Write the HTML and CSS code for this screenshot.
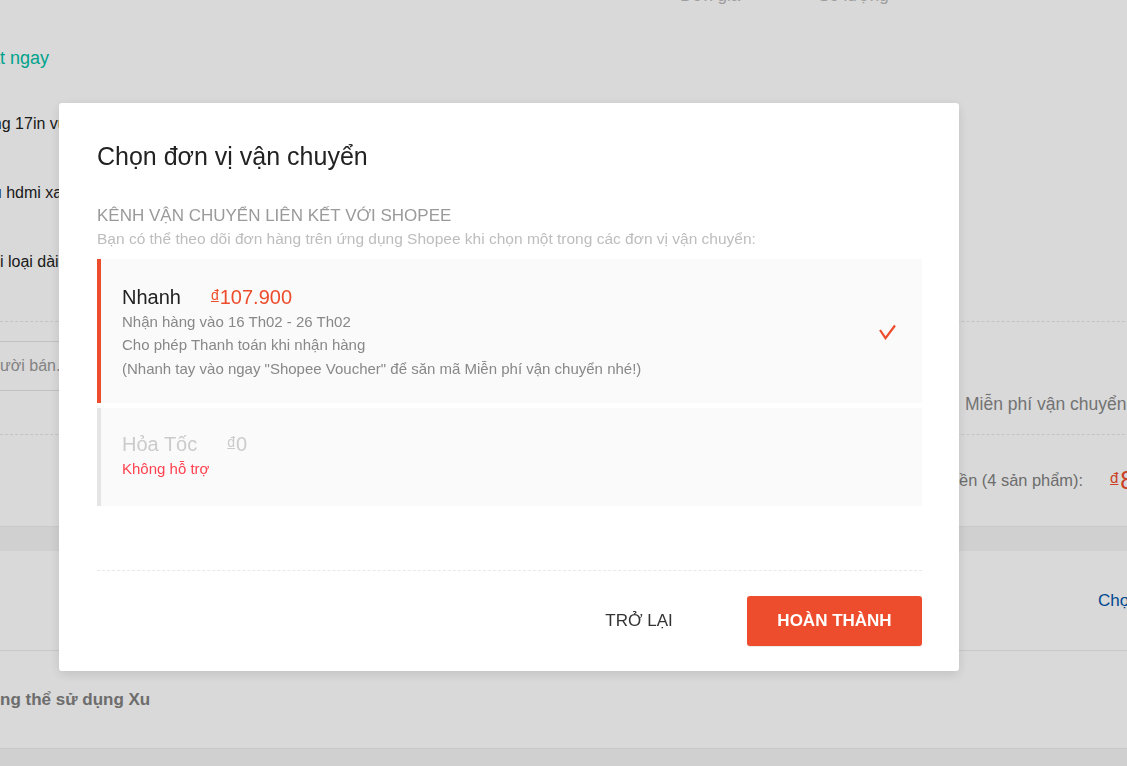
FILE: index.html
```html
<!DOCTYPE html>
<html lang="vi">
<head>
<meta charset="utf-8">
<title>Thanh toán</title>
<link rel="stylesheet" href="styles.css">
</head>
<body>
<main class="page">
  <section class="card order">
    <div class="head">
      <span class="head-product">Sản phẩm</span>
      <span>Đơn giá</span>
      <span>Số lượng</span>
    </div>
    <div class="shop"><span class="chat">Chat ngay</span></div>
    <div class="items">
      <div class="item">Màn hình phẳng 17in vuông viền đen</div>
      <div class="item">Cáp máy chiếu hdmi xanh 1.5m</div>
      <div class="item">Cáp nguồn mọi loại dài 1.5m</div>
    </div>
    <div class="extra">
      <div class="note">
        <div class="note-input"><span class="placeholder">Lưu ý cho Người bán...</span></div>
      </div>
      <div class="ship">Miễn phí vận chuyển</div>
    </div>
    <div class="total">
      <span class="total-label">Tổng số tiền (4 sản phẩm):</span>
      <span class="total-amount"><span class="cur">đ</span>838.000</span>
    </div>
  </section>
  <section class="card voucher">
    <div class="voucher-row">
      <span class="voucher-label">Shopee Voucher</span>
      <span class="voucher-link">Chọn Voucher</span>
    </div>
    <div class="coin-row">Không thể sử dụng Xu</div>
  </section>
</main>

<div class="overlay"></div>

<div class="modal" role="dialog" aria-label="Chọn đơn vị vận chuyển">
  <h2 class="modal-title">Chọn đơn vị vận chuyển</h2>
  <div class="group-title">KÊNH VẬN CHUYỂN LIÊN KẾT VỚI SHOPEE</div>
  <div class="group-desc">Bạn có thể theo dõi đơn hàng trên ứng dụng Shopee khi chọn một trong các đơn vị vận chuyển:</div>
  <div class="options">
    <div class="option selected">
      <div class="option-body">
        <div class="option-head">
          <span class="option-name">Nhanh</span>
          <span class="option-price"><span class="cur">đ</span>107.900</span>
        </div>
        <div class="option-line">Nhận hàng vào 16 Th02 - 26 Th02</div>
        <div class="option-line">Cho phép Thanh toán khi nhận hàng</div>
        <div class="option-line">(Nhanh tay vào ngay "Shopee Voucher" để săn mã Miễn phí vận chuyển nhé!)</div>
      </div>
      <svg class="check" width="19" height="16" viewBox="0 0 19 16" aria-hidden="true">
        <polyline points="3,6 8.5,14.2 18,1.5" fill="none" stroke="#ee4d2d" stroke-width="2.2"/>
      </svg>
    </div>
    <div class="option disabled">
      <div class="option-body">
        <div class="option-head">
          <span class="option-name">Hỏa Tốc</span>
          <span class="option-price"><span class="cur">đ</span>0</span>
        </div>
        <div class="option-error">Không hỗ trợ</div>
      </div>
    </div>
  </div>
  <div class="modal-footer">
    <button class="btn-back" type="button">TRỞ LẠI</button>
    <button class="btn-primary" type="button">HOÀN THÀNH</button>
  </div>
</div>
</body>
</html>
```

FILE: styles.css
```css
* { box-sizing: border-box; }

html, body {
  margin: 0;
  height: 100%;
}

body {
  background: #f5f5f5;
  font-family: "Liberation Sans", Arial, "Helvetica Neue", sans-serif;
  color: #222;
  overflow: hidden;
}

/* ---------- background page ---------- */
.page {
  width: 1420px;
  margin: -20px 0 0 -120px;
}

.card {
  background: #fff;
  border-bottom: 1px solid #ececec;
}

.order { margin-bottom: 24px; }

.head {
  display: grid;
  grid-template-columns: 800px 138px 1fr;
  height: 31px;
  line-height: 31px;
  font-size: 17px;
  color: #bbb;
  white-space: nowrap;
}
.head-product { visibility: hidden; }

.shop {
  padding: 35px 0 19px 87px;
  line-height: 24px;
  font-size: 18px;
}
.chat { color: #00bfa5; }

.items { padding-bottom: 25px; }
.item {
  height: 69px;
  line-height: 69px;
  padding-left: 15px;
  font-size: 16px;
  color: #222;
  white-space: nowrap;
}

.extra {
  display: grid;
  grid-template-columns: 1085px 1fr;
  border-top: 1px dashed #e6e6e6;
  border-bottom: 1px dashed #e6e6e6;
  padding-bottom: 18px;
}
.note { padding: 19px 0 0 10px; }
.note-input {
  width: 500px;
  height: 50px;
  border: 1px solid #e3e3e3;
  padding-left: 13px;
  line-height: 48px;
  font-size: 16px;
}
.placeholder { color: #9a9a9a; }

.ship {
  padding-top: 70px;
  line-height: 24px;
  font-size: 17.5px;
  color: #888;
  white-space: nowrap;
}

.total {
  display: grid;
  grid-template-columns: 1203px auto;
  column-gap: 27px;
  align-items: center;
  height: 91px;
  white-space: nowrap;
}
.total-label {
  justify-self: end;
  font-size: 16.4px;
  color: #808080;
}
.total-amount {
  font-size: 25px;
  color: #ee4d2d;
}
.total-amount .cur {
  font-size: 15px;
  text-decoration: underline;
  vertical-align: 6px;
  margin-right: 2px;
}

.voucher-row {
  display: grid;
  grid-template-columns: 1218px auto;
  align-items: center;
  height: 100px;
  border-bottom: 1px solid #ececec;
  font-size: 17px;
  white-space: nowrap;
}
.voucher-label { padding-left: 400px; }
.voucher-link { color: #05a; }

.coin-row {
  height: 97px;
  line-height: 97px;
  padding-left: 87px;
  font-size: 17px;
  font-weight: 700;
  color: #808080;
  white-space: nowrap;
}

/* ---------- overlay + modal ---------- */
.overlay {
  position: fixed;
  inset: 0;
  background: rgba(0, 0, 0, 0.15);
}

.modal {
  position: fixed;
  left: 59px;
  top: 103px;
  width: 900px;
  height: 568px;
  padding: 38px 37px 25px 38px;
  display: flex;
  flex-direction: column;
  background: #fff;
  border-radius: 3px;
  box-shadow: 0 3px 12px rgba(0, 0, 0, 0.12);
}

.modal-title {
  margin: 0;
  font-size: 25px;
  line-height: 30px;
  font-weight: 400;
  color: #222;
}

.group-title {
  margin-top: 35px;
  font-size: 17px;
  line-height: 20px;
  color: #9a9a9a;
}

.group-desc {
  margin-top: 4px;
  font-size: 15.5px;
  line-height: 18px;
  color: #bdbdbd;
}

.options {
  margin-top: 11px;
  display: flex;
  flex-direction: column;
  gap: 5px;
}

.option {
  display: flex;
  align-items: center;
  background: #fafafa;
  border-left: 4px solid #ee4d2d;
  padding: 24px 26px 23px 21px;
}
.option.disabled {
  border-left-color: #e5e5e5;
  padding-top: 22px;
  padding-bottom: 25px;
}

.option-body { flex: 1; }

.option-head {
  display: flex;
  align-items: baseline;
  line-height: 25px;
  font-size: 20px;
}
.option-name {
  color: #222;
  margin-right: 30px;
}
.option-price { color: #ee4d2d; }
.option-price .cur {
  font-size: 14px;
  text-decoration: underline;
  vertical-align: 4px;
  margin-right: 1px;
}
.disabled .option-name,
.disabled .option-price { color: #cbcbcb; }

.option-line {
  font-size: 15px;
  line-height: 23.4px;
  color: #888;
}

.option-error {
  font-size: 15px;
  line-height: 23.4px;
  color: #ff424f;
}

.check { flex: none; display: block; }

.modal-footer {
  margin-top: auto;
  border-top: 1px dashed #e8e8e8;
  padding-top: 25px;
  display: flex;
  justify-content: flex-end;
  align-items: center;
  gap: 38px;
}

.btn-back,
.btn-primary {
  height: 50px;
  border: 0;
  font-family: inherit;
  font-size: 17px;
  cursor: pointer;
}

.btn-back {
  width: 140px;
  background: transparent;
  color: #333;
}

.btn-primary {
  width: 175px;
  background: #ee4d2d;
  color: #fff;
  border-radius: 3px;
  font-weight: 700;
  box-shadow: 0 1px 1px rgba(0, 0, 0, 0.09);
}
```
